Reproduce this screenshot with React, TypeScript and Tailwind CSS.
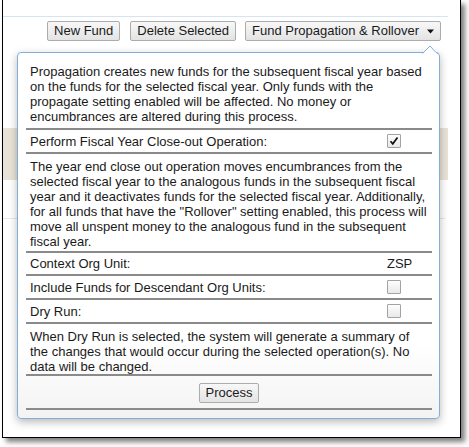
import React from 'react';

const Checkbox: React.FC<{ checked?: boolean }> = ({ checked }) => (
  <div className="w-[14px] h-[14px] border border-[#a3a3a3] rounded-[1px] bg-linear-to-b from-[#fdfdfd] to-[#e9e9e9] flex items-center justify-center">
    {checked && (
      <svg width="10" height="10" viewBox="0 0 10 10">
        <path d="M1.5 5.2 L3.8 7.8 L8.5 1.5" fill="none" stroke="#111" strokeWidth="1.7" />
      </svg>
    )}
  </div>
);

const Button: React.FC<{ children: React.ReactNode; className?: string }> = ({ children, className = '' }) => (
  <button
    className={`h-[20px] px-[6px] border border-[#acacac] rounded-[2px] bg-linear-to-b from-[#f8f8f8] to-[#e3e3e3] text-[13px] leading-[18px] text-[#1a1a1a] flex items-center ${className}`}
  >
    {children}
  </button>
);

const Row: React.FC<{ label: string; className?: string; children: React.ReactNode }> = ({ label, className = 'h-[24px]', children }) => (
  <div className={`flex items-center border-b-2 border-[#8a8a8a] ${className}`}>
    <div className="flex-1 pl-[4px]">{label}</div>
    <div className="w-[45px]">{children}</div>
  </div>
);

export default function App() {
  return (
    <div className="w-[469px] h-[447px] bg-white font-['Liberation_Sans',Arial,sans-serif] text-[13px] text-[#1a1a1a]">
      <div className="relative ml-[2px] w-[459px] h-[438px] border-x border-b border-black bg-white shadow-[4px_4px_5px_rgba(0,0,0,0.5)]">
        <div className="h-[17px] w-[445px] border-b border-[#d5e4f0]" />

        <div className="mt-[4px] w-[445px] pr-[7px] flex justify-end">
          <Button>New Fund</Button>
          <Button className="ml-[10px]">Delete Selected</Button>
          <Button className="ml-[9px]">
            Fund Propagation &amp; Rollover
            <svg width="7" height="5" viewBox="0 0 7 5" className="ml-[8px]">
              <path d="M0 0.5 H7 L3.5 4.5 Z" fill="#111" />
            </svg>
          </Button>
        </div>

        <div className="mt-[87px] h-[52px] w-[445px] bg-[#e8e3d6]" />
        <div className="mt-[38px] h-px w-[442px] bg-[#e8e8e8]" />

        {/* dropdown panel */}
        <div className="absolute left-[14px] top-[52px] w-[423px] border border-[#82aed8] rounded-[4px] bg-linear-to-b from-white from-80% to-[#f3f3f3] shadow-[0_3px_9px_rgba(0,0,0,0.28)] pt-[11px] pb-[8px] pl-[8px] pr-[7px] leading-[15px]">
          <svg width="16" height="9" viewBox="0 0 16 9" className="absolute left-[404px] top-[-8px]">
            <path d="M0 9 L8 1 L16 9 Z" fill="white" />
            <path d="M0.5 8.5 L8 1 L14 7.5 L16 8.5" fill="none" stroke="#82aed8" strokeWidth="1" />
          </svg>

          <div className="border-b-2 border-[#8a8a8a] pl-[4px] pr-[3px] pb-[4px]">
            Propagation creates new funds for the subsequent fiscal year based on the funds for the selected
            fiscal year. Only funds with the propagate setting enabled will be affected. No money or
            encumbrances are altered during this process.
          </div>

          <Row label="Perform Fiscal Year Close-out Operation:">
            <Checkbox checked />
          </Row>

          <div className="border-b-2 border-[#8a8a8a] pl-[4px] pr-[3px] pt-[5px] pb-[2px]">
            The year end close out operation moves encumbrances from the selected fiscal year to the analogous
            funds in the subsequent fiscal year and it deactivates funds for the selected fiscal year.
            Additionally, for all funds that have the "Rollover" setting enabled, this process will move all
            unspent money to the analogous fund in the subsequent fiscal year.
          </div>

          <Row label="Context Org Unit:" className="h-[23px]">
            <span>ZSP</span>
          </Row>
          <Row label="Include Funds for Descendant Org Units:">
            <Checkbox />
          </Row>
          <Row label="Dry Run:">
            <Checkbox />
          </Row>

          <div className="border-b-2 border-[#8a8a8a] pl-[4px] pr-[3px] pt-[5px]">
            When Dry Run is selected, the system will generate a summary of the changes that would occur during
            the selected operation(s). No data will be changed.
          </div>

          <div className="flex justify-center border-b-2 border-[#8a8a8a] pt-[7px] pb-[5px]">
            <Button>Process</Button>
          </div>
        </div>
      </div>
    </div>
  );
}
